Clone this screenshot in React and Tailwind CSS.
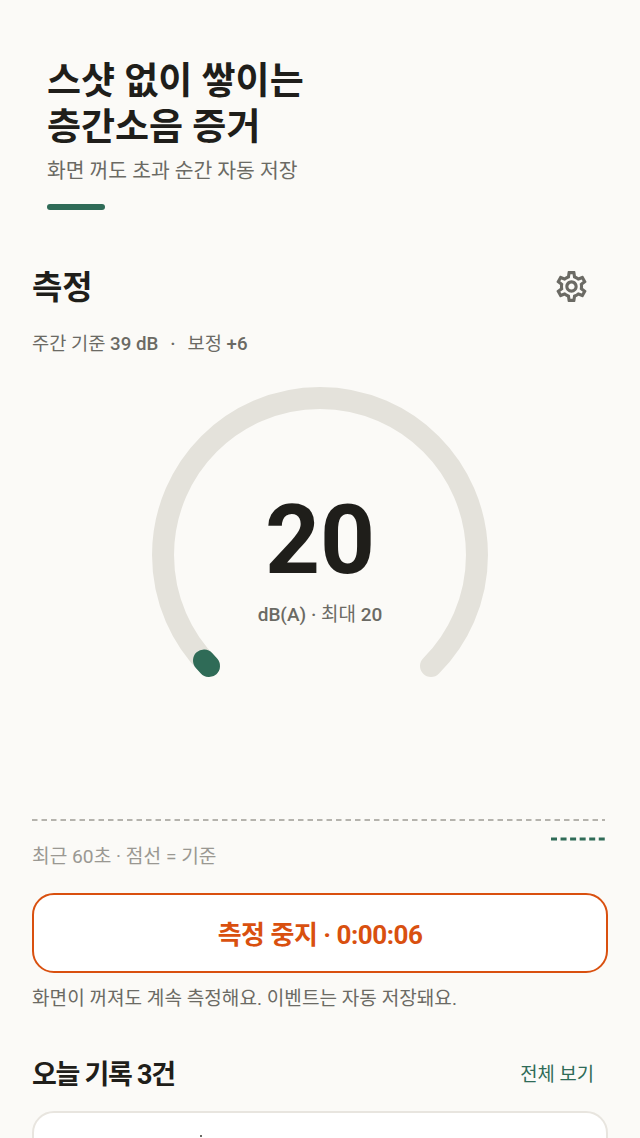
import React from "react";
import { MdOutlineSettings } from "react-icons/md";

const FONT = "font-['Roboto','Noto_Sans_CJK_KR',sans-serif]";

const Gauge = () => (
    <div className="relative mx-auto mt-[17px] h-[320px] w-[360px]">
        <svg width="360" height="320" viewBox="0 0 360 320" className="block">
            <path
                d="M 69 292 A 157 157 0 1 1 291 292"
                fill="none"
                stroke="#e4e2db"
                strokeWidth="22"
                strokeLinecap="round"
            />
            <path
                d="M 64 286.5 L 69 292"
                fill="none"
                stroke="#2f6b57"
                strokeWidth="22"
                strokeLinecap="round"
            />
        </svg>
        <div className="absolute left-0 right-0 top-[110px] flex flex-col items-center">
            <div className="text-[96px] font-bold leading-[112px] text-[#1f1e1a]">
                20
            </div>
            <div className="mt-[7px] text-[19px] font-medium leading-[24px] text-[#6b6a64]">
                dB(A) · <span className="font-normal">최대</span> 20
            </div>
        </div>
    </div>
);

const Chart = () => (
    <svg width="576" height="22" viewBox="0 0 576 22" className="mt-[125px] block">
        <line x1="0" y1="1" x2="573" y2="1" stroke="#b5b3ad" strokeWidth="2" strokeDasharray="5.5 4" />
        <line x1="519" y1="20" x2="573" y2="20" stroke="#2f6b57" strokeWidth="3" strokeDasharray="6 3.55" />
    </svg>
);

const App = () => {
    return (
        <div className={`${FONT} h-[1138px] overflow-hidden bg-[#fbfaf7]`}>
            <header className="px-[47px] pt-[59px]">
                <h1 className="text-[37px] font-bold leading-[46px] text-[#1f1e1a]">
                    스샷 없이 쌓이는
                    <br />
                    층간소음 증거
                </h1>
                <p className="mt-[6px] text-[20.4px] leading-[28px] text-[#6b6a64]">
                    화면 꺼도 초과 순간 자동 저장
                </p>
                <div className="mt-[19px] h-[6px] w-[58px] rounded-full bg-[#2f6b57]" />
            </header>

            <main className="px-[32px]">
                <div className="mt-[56px] flex items-center justify-between">
                    <h2 className="text-[33px] font-bold leading-[44px] text-[#1f1e1a]">
                        측정
                    </h2>
                    <button className="mb-[4px] mr-[18px] text-[#6b6a64]">
                        <MdOutlineSettings size={37} />
                    </button>
                </div>
                <p className="mt-[21px] text-[18.7px] font-medium leading-[26px] text-[#6b6a64]">
                    <span className="font-normal">주간 기준</span> 39 dB
                    <span className="mx-[12px]">·</span>
                    <span className="font-normal">보정</span> +6
                </p>

                <Gauge />

                <Chart />
                <p className="mt-[3px] text-[19.2px] leading-[26px] text-[#9a9892]">
                    최근 60초 · 점선 = 기준
                </p>

                <button className="mt-[23px] flex h-[80px] w-full items-center justify-center rounded-[22px] border-[2.5px] border-[#d9500f] bg-white pt-[5px] text-[26px] font-bold tracking-[-0.5px] text-[#d9500f]">
                    측정 중지 · 0:00:06
                </button>
                <p className="mt-[13px] text-[19.1px] leading-[26px] text-[#6b6a64]">
                    화면이 꺼져도 계속 측정해요. 이벤트는 자동 저장돼요.
                </p>

                <div className="mt-[43px] flex items-center justify-between">
                    <h3 className="text-[27px] font-bold leading-[40px] tracking-[-1.3px] text-[#1f1e1a]">
                        오늘 기록 3건
                    </h3>
                    <button className="mr-[14px] text-[18.8px] leading-[28px] text-[#2f6b57]">
                        전체 보기
                    </button>
                </div>
                <div className="mt-[16px] h-[200px] rounded-[22px] border-2 border-[#e8e5df] bg-white pl-[166px] pt-[22px]">
                    <div className="h-[2px] w-[2px] bg-[#6b6a64]" />
                </div>
            </main>
        </div>
    );
};

export default App;
